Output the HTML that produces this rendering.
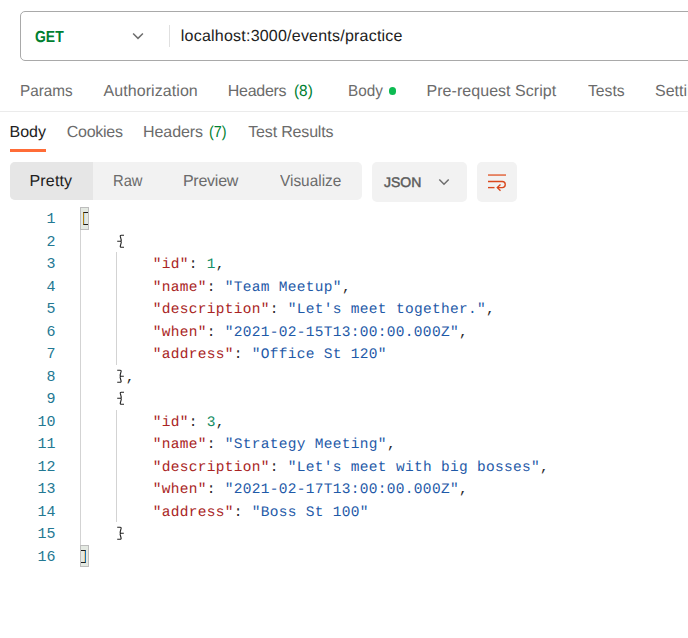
<!DOCTYPE html>
<html><head><meta charset="utf-8">
<style>
*{box-sizing:border-box;margin:0;padding:0}
html,body{width:688px;height:638px;overflow:hidden;background:#fff}
body{font-family:"Liberation Sans",sans-serif;position:relative;color:#6b6b6b}
.a{position:absolute;white-space:nowrap}
.t{position:absolute;white-space:nowrap;line-height:20px;text-rendering:geometricPrecision}
.ln{position:absolute;left:0;width:55.5px;text-align:right;color:#237893;font-family:"Liberation Mono",monospace;font-size:15px;line-height:22.5px;height:22.5px}
.cl{position:absolute;left:80.8px;white-space:pre;font-family:"Liberation Mono",monospace;font-size:14.5px;letter-spacing:0.3px;line-height:22.5px;height:22.5px;color:#2a2a2a;text-rendering:geometricPrecision}
i{font-style:normal}
.k{color:#a92424}.s{color:#1f5aa8}.n{color:#168d64}
.gd{position:absolute;width:1px;background:#d3d3d3}
.bx{position:absolute;left:80px;width:9px;height:22.5px;background:#e4e9e2;border:1px solid #bdbdbd}
</style></head><body>
<div class="a" style="left:20px;top:11px;width:700px;height:50px;border:1px solid #a9a9a9;border-radius:5px"></div>
<svg class="a" style="left:130px;top:30px" width="16" height="12" viewBox="0 0 16 12"><path d="M3.1 3.5 L8 8.4 L12.9 3.5" fill="none" stroke="#6e6e6e" stroke-width="1.5"/></svg>
<div class="a" style="left:169px;top:25px;width:1px;height:22px;background:#e0e0e0"></div>
<div class="a dot" style="left:388.7px;top:87.3px;width:7.4px;height:7.4px;border-radius:50%;background:#0cbb52"></div>
<div class="a" style="left:0;top:111px;width:688px;height:1px;background:#ebebeb"></div>
<div class="a" style="left:10px;top:149px;width:36px;height:3px;background:#ff6c37;"></div>
<div class="a" style="left:10px;top:162px;width:352px;height:38px;background:#f2f2f2;border-radius:5px"></div>
<div class="a" style="left:10px;top:162px;width:83px;height:38px;background:#e6e6e6;border-radius:5px 0 0 5px"></div>
<div class="a" style="left:372px;top:162px;width:95px;height:40px;background:#f2f2f2;border-radius:5px"></div>
<svg class="a" style="left:436px;top:176px" width="16" height="12" viewBox="0 0 16 12"><path d="M3.3 3.4 L8 8.2 L12.7 3.4" fill="none" stroke="#6e6e6e" stroke-width="1.5"/></svg>
<div class="a" style="left:477px;top:162px;width:40px;height:40px;background:#f2f2f2;border-radius:5px"></div>
<svg class="a" style="left:477px;top:162px" width="40" height="40" viewBox="0 0 40 40"><g fill="none" stroke="#d9481d" stroke-width="1.35"><path d="M11 13.05H29" stroke="#e2673f" stroke-width="1.5"/><path d="M11 19.5H25.2a3.05 3.05 0 0 1 0 6.1H20.4"/><path d="M11 25.6H17.5"/><path d="M23.5 22.6L20.3 25.6l3.2 3.2"/></g></svg>

<div class="t" id="get" style="left:35.34px;top:28.01px;font-size:16px;color:#007f31;transform-origin:0 0;transform:scaleX(0.8707);font-weight:bold">GET</div>
<div class="t" id="url" style="left:180.84px;top:27.01px;font-size:16px;color:#212121;letter-spacing:0.221px;">localhost:3000/events/practice</div>
<div class="t" id="t1" style="left:20.00px;top:81.76px;font-size:16px;color:#6b6b6b;transform-origin:0 0;transform:scaleX(0.9554);">Params</div>
<div class="t" id="t2" style="left:103.55px;top:81.76px;font-size:16px;color:#6b6b6b;letter-spacing:0.067px;">Authorization</div>
<div class="t" id="t3" style="left:227.75px;top:81.76px;font-size:16px;color:#6b6b6b;letter-spacing:-0.267px;">Headers</div>
<div class="t" id="t3b" style="left:293.55px;top:81.76px;font-size:16px;color:#007f31;transform-origin:0 0;transform:scaleX(0.9579);">(8)</div>
<div class="t" id="t4" style="left:347.75px;top:81.76px;font-size:16px;color:#6b6b6b;transform-origin:0 0;transform:scaleX(0.9552);">Body</div>
<div class="t" id="t5" style="left:426.50px;top:81.76px;font-size:16px;color:#6b6b6b;letter-spacing:0.047px;">Pre-request Script</div>
<div class="t" id="t6" style="left:588.18px;top:81.76px;font-size:16px;color:#6b6b6b;transform-origin:0 0;transform:scaleX(0.9831);">Tests</div>
<div class="t" id="t7" style="left:654.96px;top:81.76px;font-size:16px;color:#6b6b6b;letter-spacing:0.05px">Settings</div>
<div class="t" id="r1" style="left:9.50px;top:123.01px;font-size:16px;color:#212121;letter-spacing:0.000px;">Body</div>
<div class="t" id="r2" style="left:66.80px;top:123.01px;font-size:16px;color:#6b6b6b;letter-spacing:-0.267px;">Cookies</div>
<div class="t" id="r3" style="left:143.04px;top:123.01px;font-size:16px;color:#6b6b6b;letter-spacing:-0.080px;">Headers</div>
<div class="t" id="r3b" style="left:208.84px;top:123.01px;font-size:16px;color:#007f31;transform-origin:0 0;transform:scaleX(0.8933);">(7)</div>
<div class="t" id="r4" style="left:248.30px;top:123.01px;font-size:16px;color:#6b6b6b;letter-spacing:-0.175px;">Test Results</div>
<div class="t" id="s1" style="left:29.50px;top:171.51px;font-size:16px;color:#212121;letter-spacing:0.160px;">Pretty</div>
<div class="t" id="s2" style="left:112.75px;top:171.51px;font-size:16px;color:#6b6b6b;transform-origin:0 0;transform:scaleX(0.9212);">Raw</div>
<div class="t" id="s3" style="left:182.88px;top:171.51px;font-size:16px;color:#6b6b6b;letter-spacing:-0.240px;">Preview</div>
<div class="t" id="s4" style="left:280.18px;top:171.51px;font-size:16px;color:#6b6b6b;transform-origin:0 0;transform:scaleX(0.9617);">Visualize</div>
<div class="t" id="js" style="left:384.30px;top:171.76px;font-size:14px;color:#5a5a5a;transform-origin:0 0;transform:scaleX(1.0005);-webkit-text-stroke:0.45px #5a5a5a">JSON</div>
<div class="gd" style="left:80px;top:229.5px;height:315.0px"></div>
<div class="gd" style="left:116px;top:252.0px;height:112.5px"></div>
<div class="gd" style="left:116px;top:409.5px;height:112.5px"></div>
<div class="bx" style="top:207.0px"></div>
<div class="bx" style="top:544.5px"></div>
<div class="ln" style="top:209.0px">1</div>
<div class="ln" style="top:231.5px">2</div>
<div class="cl" style="top:231.75px">     </div>
<div class="ln" style="top:254.0px">3</div>
<div class="cl" style="top:254.25px">        <i class="k">"id"</i>: <i class="n">1</i>,</div>
<div class="ln" style="top:276.5px">4</div>
<div class="cl" style="top:276.75px">        <i class="k">"name"</i>: <i class="s">"Team Meetup"</i>,</div>
<div class="ln" style="top:299.0px">5</div>
<div class="cl" style="top:299.25px">        <i class="k">"description"</i>: <i class="s">"Let's meet together."</i>,</div>
<div class="ln" style="top:321.5px">6</div>
<div class="cl" style="top:321.75px">        <i class="k">"when"</i>: <i class="s">"2021-02-15T13:00:00.000Z"</i>,</div>
<div class="ln" style="top:344.0px">7</div>
<div class="cl" style="top:344.25px">        <i class="k">"address"</i>: <i class="s">"Office St 120"</i></div>
<div class="ln" style="top:366.5px">8</div>
<div class="cl" style="top:366.75px">     ,</div>
<div class="ln" style="top:389.0px">9</div>
<div class="cl" style="top:389.25px">     </div>
<div class="ln" style="top:411.5px">10</div>
<div class="cl" style="top:411.75px">        <i class="k">"id"</i>: <i class="n">3</i>,</div>
<div class="ln" style="top:434.0px">11</div>
<div class="cl" style="top:434.25px">        <i class="k">"name"</i>: <i class="s">"Strategy Meeting"</i>,</div>
<div class="ln" style="top:456.5px">12</div>
<div class="cl" style="top:456.75px">        <i class="k">"description"</i>: <i class="s">"Let's meet with big bosses"</i>,</div>
<div class="ln" style="top:479.0px">13</div>
<div class="cl" style="top:479.25px">        <i class="k">"when"</i>: <i class="s">"2021-02-17T13:00:00.000Z"</i>,</div>
<div class="ln" style="top:501.5px">14</div>
<div class="cl" style="top:501.75px">        <i class="k">"address"</i>: <i class="s">"Boss St 100"</i></div>
<div class="ln" style="top:524.0px">15</div>
<div class="cl" style="top:524.25px">     </div>
<div class="ln" style="top:546.5px">16</div>
<svg class="a" style="left:116px;top:228.7px" width="10" height="23" viewBox="0 0 10 22.5"><path d="M8 6H5.2Q4.1 6 4.3 7.2L5.2 10.6Q5.5 12 4.2 12H1.2M4.2 12Q5.5 12 5.2 13.4L4.3 16.8Q4.1 18 5.2 18H8" fill="none" stroke="#262626" stroke-width="1.15"/></svg>
<svg class="a" style="left:116px;top:386.2px" width="10" height="23" viewBox="0 0 10 22.5"><path d="M8 6H5.2Q4.1 6 4.3 7.2L5.2 10.6Q5.5 12 4.2 12H1.2M4.2 12Q5.5 12 5.2 13.4L4.3 16.8Q4.1 18 5.2 18H8" fill="none" stroke="#262626" stroke-width="1.15"/></svg>
<svg class="a" style="left:116px;top:363.7px" width="10" height="23" viewBox="0 0 10 22.5"><path d="M1.2 6H4.2Q5.3 6 5.1 7.2L4.2 10.6Q3.9 12 5.2 12H7.8M5.2 12Q3.9 12 4.2 13.4L5.1 16.8Q5.3 18 4.2 18H1.2" fill="none" stroke="#262626" stroke-width="1.15"/></svg>
<svg class="a" style="left:116px;top:521.2px" width="10" height="23" viewBox="0 0 10 22.5"><path d="M1.2 6H4.2Q5.3 6 5.1 7.2L4.2 10.6Q3.9 12 5.2 12H7.8M5.2 12Q3.9 12 4.2 13.4L5.1 16.8Q5.3 18 4.2 18H1.2" fill="none" stroke="#262626" stroke-width="1.15"/></svg>
<div class="a" style="left:82.9px;top:211.9px;width:5px;height:13.2px;border:1.3px solid #1e1e1e;border-right:none;border-left:1.3px solid #b9800c;box-shadow:inset 0.8px 0 0 #a9d3f3"></div>
<div class="a" style="left:81px;top:550.1px;width:5.2px;height:12.9px;border:1.3px solid #1e1e1e;border-left:none;border-right:1.25px solid #1775bb;box-shadow:inset -0.9px 0 0 #f1c27c"></div>
</body></html>
